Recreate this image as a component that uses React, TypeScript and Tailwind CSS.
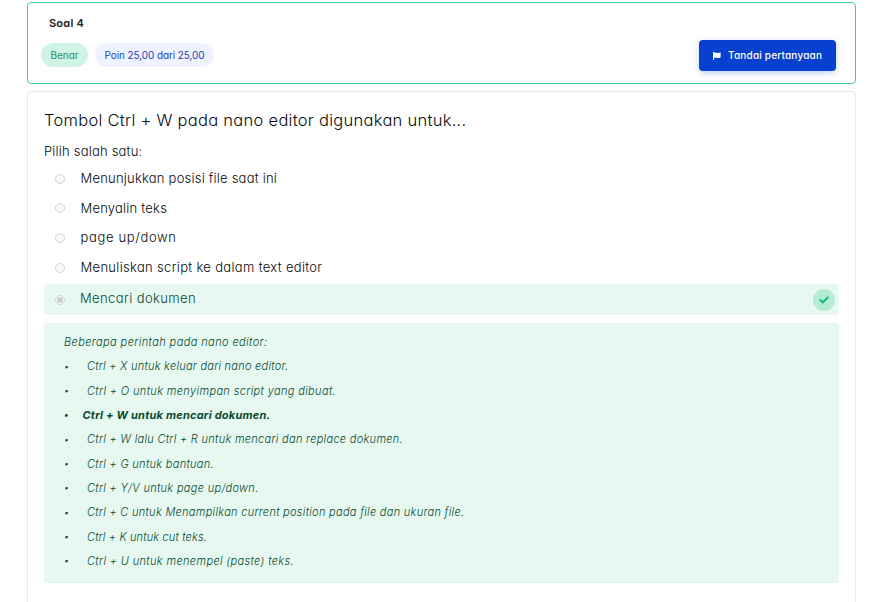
import { FaCheck } from "react-icons/fa";

const options = [
  { text: "Menunjukkan posisi file saat ini", tracking: "tracking-[0.22px]" },
  { text: "Menyalin teks", tracking: "tracking-[0.22px]" },
  { text: "page up/down", tracking: "tracking-[0.66px]" },
  { text: "Menuliskan script ke dalam text editor", tracking: "tracking-[0.32px]" },
];

const commands = [
  { text: "Ctrl + X untuk keluar dari nano editor.", tracking: "tracking-[0.25px]" },
  { text: "Ctrl + O untuk menyimpan script yang dibuat.", tracking: "tracking-[0.36px]" },
  { text: "Ctrl + W untuk mencari dokumen.", tracking: "tracking-[0.225px]", bold: true },
  { text: "Ctrl + W lalu Ctrl + R untuk mencari dan replace dokumen.", tracking: "tracking-[0.293px]" },
  { text: "Ctrl + G untuk bantuan.", tracking: "tracking-[0.306px]" },
  { text: "Ctrl + Y/V untuk page up/down.", tracking: "tracking-[0.31px]" },
  { text: "Ctrl + C untuk Menampilkan current position pada file dan ukuran file.", tracking: "tracking-[0.288px]" },
  { text: "Ctrl + K untuk cut teks.", tracking: "tracking-[0.157px]" },
  { text: "Ctrl + U untuk menempel (paste) teks.", tracking: "tracking-[0.355px]" },
];

function Radio({ checked = false }: { checked?: boolean }) {
  return (
    <span className="flex size-[10px] shrink-0 items-center justify-center rounded-full border border-[#d3d5d4] bg-[#f8f8f8]/80">
      {checked && <span className="size-[6px] rounded-full bg-[#cbcfcd]" />}
    </span>
  );
}

function Flag() {
  return (
    <svg viewBox="0 0 8 8" className="mr-[7px] size-[8px] fill-current">
      <path d="M0 0h1v.8C2.600 .1 4 1.500 7.600 .6v5C5 6.700 3.200 5.200 1 6v2H0z" />
    </svg>
  );
}

function Header() {
  return (
    <header className="h-[82px] rounded-[4px] border border-[#43cf96] pr-[19px] pl-[13px]">
      <h3 className="ml-2 flex h-[40px] items-center text-[11px] font-semibold tracking-[0.22px] text-[#1d2125]">
        Soal 4
      </h3>
      <div className="flex items-start justify-between">
        <div className="flex gap-[7px] text-[10px]">
          <span className="flex h-[24px] w-[47px] items-center justify-center rounded-full bg-[#cff3e4] text-[#2f8f62]">
            Benar
          </span>
          <span className="flex h-[24px] w-[119px] items-center justify-center rounded-full bg-[#eff3ff] tracking-[-0.095px] text-[#1f3fbb]">
            Poin 25,00 dari 25,00
          </span>
        </div>
        <button className="-mt-[3px] flex h-[31px] w-[137px] items-center rounded-[4px] bg-[#0840cf] pl-[14px] text-[10px] font-medium tracking-[0.19px] whitespace-nowrap text-white shadow-[0_2px_6px_rgba(8,64,207,0.25)]">
          <Flag />
          Tandai pertanyaan
        </button>
      </div>
    </header>
  );
}

export default function App() {
  return (
    <main className="h-[602px] overflow-hidden bg-white pt-[2px] pr-[30px] pl-[27px] text-[#080b0e] [font-family:Inter,'Noto_Sans',sans-serif] [font-feature-settings:'cv11']">
      <Header />
      <section className="mt-[7px] h-[540px] rounded-[4px] border border-[#e6e7e8] px-[16px] pt-[13px]">
        <h2 className="flex h-[30px] items-center text-[16.5px] font-light tracking-[0.28px] whitespace-nowrap">
          Tombol Ctrl + W pada nano editor digunakan untuk...
        </h2>
        <p className="mt-[6px] flex h-[22px] items-center text-[13px] font-light tracking-[0.2px]">
          Pilih salah satu:
        </p>
        <ul className="mt-px text-[13px] font-light">
          {options.map((o) => (
            <li key={o.text} className="flex h-[29.6px] items-center gap-[15.5px] pl-[11px]">
              <Radio />
              <span className={o.tracking}>{o.text}</span>
            </li>
          ))}
        </ul>
        <div className="mt-[1.6px] flex h-[31px] items-center gap-[15px] rounded-[4px] bg-[#e6f8f0] pt-px pr-[4px] pl-[11px] text-[13px] font-light text-[#064a30]">
          <Radio checked />
          <span className="-mt-[3px] flex-1 tracking-[0.4px]">Mencari dokumen</span>
          <span className="flex size-[22px] items-center justify-center rounded-full bg-[#b5ecd5]">
            <FaCheck className="size-[10px] text-[#10b97c]" />
          </span>
        </div>
        <div className="mt-[8px] h-[260px] rounded-[4px] border-b border-[#d3f4e6] bg-[#e6f8f0] pt-[7px] pl-[20px] text-[11px] font-light whitespace-nowrap text-[#064a30] italic">
          <p className="flex h-[24.35px] items-center tracking-[0.4px]">Beberapa perintah pada nano editor:</p>
          <ul>
            {commands.map((c) => (
              <li key={c.text} className="flex h-[24.35px] items-center">
                <span className={c.bold ? "w-[18.5px] text-[9px] font-semibold" : "w-[23px] text-[9px]"}>•</span>
                <span className={`${c.tracking} ${c.bold ? "font-bold" : ""}`}>{c.text}</span>
              </li>
            ))}
          </ul>
        </div>
      </section>
    </main>
  );
}
